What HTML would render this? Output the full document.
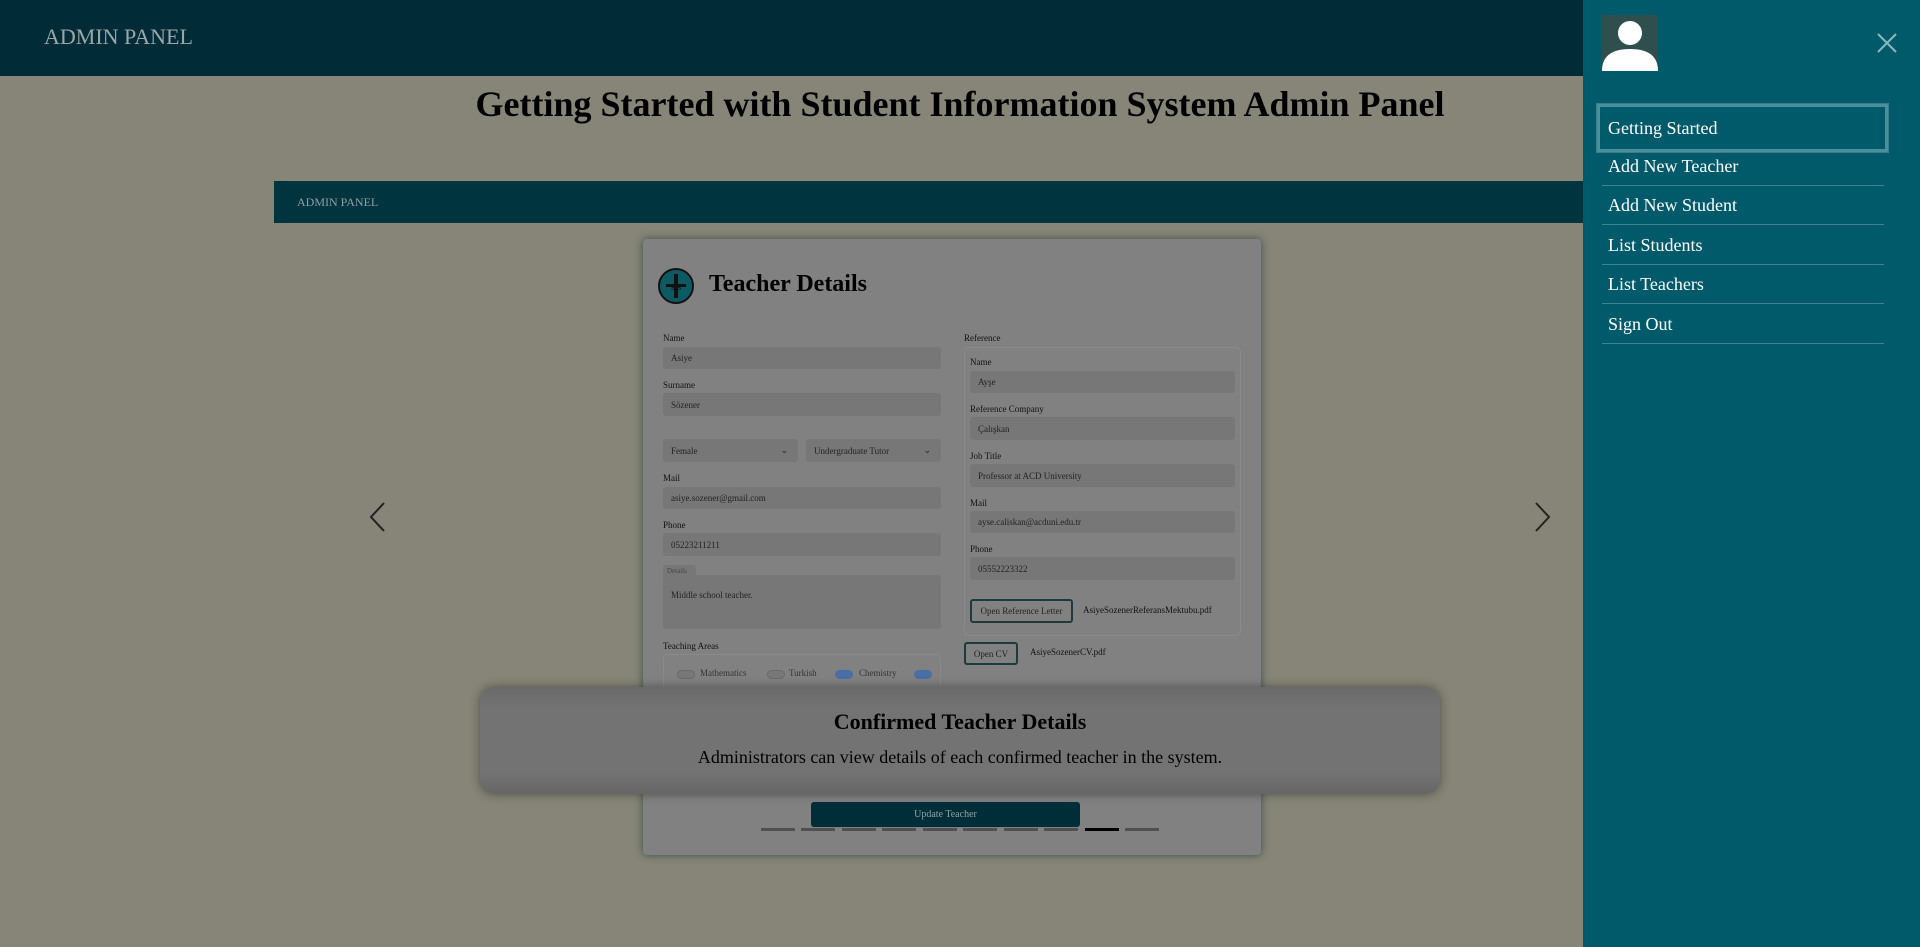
<!DOCTYPE html>
<html><head><meta charset="utf-8"><style>
*{box-sizing:border-box;margin:0;padding:0}
body{width:1920px;height:947px;overflow:hidden;background:#868577;font-family:"Liberation Serif",serif;position:relative;color:#111}
.a{position:absolute}
.hdr{left:0;top:0;width:1920px;height:76px;background:#012c37}
.lbl{font-size:9px;color:#111}
.inp{background:#777;border-radius:3px;font-size:9px;color:#222;padding-left:8px;display:flex;align-items:center}
.card{left:643px;top:239px;width:618px;height:616px;background:#818181;border-radius:4px;box-shadow:0 0 8px rgba(0,40,40,.6)}
.btn{border:2px solid #1f3a3a;border-radius:3px;font-size:9px;color:#222;display:flex;align-items:center;justify-content:center}
.tg{width:18px;height:9px;border-radius:5px;background:#787878;border:1px solid #6a6a6a}
.tg.on{background:#4a6fa5;border-color:#4a6fa5}
.dot{top:828px;width:34px;height:3px;background:#505050}
.side{left:1583px;top:0;width:337px;height:947px;background:#005a69}
.mi{left:1602px;width:282px;font-size:18px;color:#fff;height:39px;border-bottom:1px solid #3f8591;display:flex;align-items:center;padding-left:6px}
</style></head><body>
<div class="a hdr"></div>
<div class="a" style="left:44px;top:24px;font-size:22px;color:#9aa6a8">ADMIN PANEL</div>
<div class="a" style="left:0;width:1920px;top:83px;text-align:center;font-size:36px;font-weight:bold;color:#000">Getting Started with Student Information System Admin Panel</div>
<div class="a" style="left:274px;top:181px;width:1400px;height:42px;background:#00343f"></div>
<div class="a" style="left:297px;top:195px;font-size:12px;color:#8fa0a3">ADMIN PANEL</div>
<svg class="a" style="left:366px;top:500px" width="22" height="34"><path d="M18 3 L5 17 L18 31" stroke="#222" stroke-width="2" fill="none"/></svg>
<svg class="a" style="left:1532px;top:500px" width="22" height="34"><path d="M4 3 L17 17 L4 31" stroke="#222" stroke-width="2" fill="none"/></svg>
<div class="a card"></div>
<svg class="a" style="left:658px;top:268px" width="36" height="36"><circle cx="18" cy="18" r="17" fill="#0d5a63" stroke="#111" stroke-width="2"/><rect x="16" y="6" width="4" height="24" fill="#111"/><rect x="8" y="16" width="20" height="3" fill="#111"/><text x="18" y="22" font-size="10" text-anchor="middle" font-family="Liberation Serif" fill="#111">s  s</text></svg>
<div class="a" style="left:709px;top:271px;font-size:24px;font-weight:bold;color:#000">Teacher Details</div>
<div class="a lbl" style="left:663px;top:333px">Name</div>
<div class="a inp" style="left:663px;top:347px;width:278px;height:22px">Asiye</div>
<div class="a lbl" style="left:663px;top:380px">Surname</div>
<div class="a inp" style="left:663px;top:393px;width:278px;height:23px">Sözener</div>
<div class="a inp" style="left:663px;top:439px;width:135px;height:23px">Female<span style="margin-left:auto;margin-right:10px">⌄</span></div>
<div class="a inp" style="left:806px;top:439px;width:135px;height:23px">Undergraduate Tutor<span style="margin-left:auto;margin-right:10px">⌄</span></div>
<div class="a lbl" style="left:663px;top:473px">Mail</div>
<div class="a inp" style="left:663px;top:487px;width:278px;height:22px">asiye.sozener@gmail.com</div>
<div class="a lbl" style="left:663px;top:520px">Phone</div>
<div class="a inp" style="left:663px;top:533px;width:278px;height:23px">05223211211</div>
<div class="a inp" style="left:663px;top:565px;width:33px;height:12px;font-size:7px;color:#444;padding-left:4px">Details</div>
<div class="a inp" style="left:663px;top:575px;width:278px;height:54px;align-items:flex-start;padding-top:15px">Middle school teacher.</div>
<div class="a lbl" style="left:663px;top:641px">Teaching Areas</div>
<div class="a" style="left:663px;top:654px;width:278px;height:60px;border:1px solid #8a8a8a;border-radius:4px"></div>
<div class="a tg" style="left:677px;top:670px"></div><div class="a lbl" style="left:700px;top:668px;color:#333">Mathematics</div>
<div class="a tg" style="left:767px;top:670px"></div><div class="a lbl" style="left:789px;top:668px;color:#333">Turkish</div>
<div class="a tg on" style="left:835px;top:670px"></div><div class="a lbl" style="left:859px;top:668px;color:#333">Chemistry</div>
<div class="a tg on" style="left:914px;top:670px"></div>
<div class="a lbl" style="left:964px;top:333px">Reference</div>
<div class="a" style="left:964px;top:347px;width:277px;height:289px;border:1px solid #8a8a8a;border-radius:5px"></div>
<div class="a lbl" style="left:970px;top:357px">Name</div>
<div class="a inp" style="left:970px;top:371px;width:265px;height:22px">Ayşe</div>
<div class="a lbl" style="left:970px;top:404px">Reference Company</div>
<div class="a inp" style="left:970px;top:417px;width:265px;height:23px">Çalışkan</div>
<div class="a lbl" style="left:970px;top:451px">Job Title</div>
<div class="a inp" style="left:970px;top:464px;width:265px;height:23px">Professor at ACD University</div>
<div class="a lbl" style="left:970px;top:498px">Mail</div>
<div class="a inp" style="left:970px;top:511px;width:265px;height:22px">ayse.caliskan@acduni.edu.tr</div>
<div class="a lbl" style="left:970px;top:544px">Phone</div>
<div class="a inp" style="left:970px;top:557px;width:265px;height:23px">05552223322</div>
<div class="a btn" style="left:970px;top:599px;width:103px;height:24px">Open Reference Letter</div>
<div class="a lbl" style="left:1083px;top:605px">AsiyeSozenerReferansMektubu.pdf</div>
<div class="a btn" style="left:964px;top:642px;width:54px;height:23px">Open CV</div>
<div class="a lbl" style="left:1030px;top:647px">AsiyeSozenerCV.pdf</div>
<div class="a lbl" style="left:678px;top:723px;color:#666">Terminated</div>
<div class="a" style="left:665px;top:750px;width:10px;height:10px;background:#8aa;border-radius:2px"></div>
<div class="a" style="left:480px;top:687px;width:960px;height:107px;border-radius:14px;background:linear-gradient(#6a6a6a,#737373 20%,#737373 80%,#666);box-shadow:0 0 10px rgba(0,0,0,.4)"></div>
<div class="a" style="left:480px;width:960px;top:709px;text-align:center;font-size:22px;font-weight:bold;color:#000">Confirmed Teacher Details</div>
<div class="a" style="left:480px;width:960px;top:747px;text-align:center;font-size:18px;color:#000">Administrators can view details of each confirmed teacher in the system.</div>
<div class="a" style="left:811px;top:802px;width:269px;height:25px;background:#002e38;border-radius:3px;color:#8fa3a6;font-size:10px;display:flex;align-items:center;justify-content:center">Update Teacher</div>
<div class="a dot" style="left:761px"></div><div class="a dot" style="left:801px"></div><div class="a dot" style="left:842px"></div><div class="a dot" style="left:882px"></div><div class="a dot" style="left:923px"></div><div class="a dot" style="left:963px"></div><div class="a dot" style="left:1004px"></div><div class="a dot" style="left:1044px"></div><div class="a dot" style="left:1085px;background:#000"></div><div class="a dot" style="left:1125px"></div>
<div class="a side"></div>
<svg class="a" style="left:1602px;top:15px" width="56" height="56"><rect width="56" height="56" fill="#2f4f4f"/><circle cx="28" cy="18" r="12" fill="#fff"/><path d="M0 56 Q0 34 28 34 Q56 34 56 56Z" fill="#fff"/></svg>
<svg class="a" style="left:1877px;top:33px" width="20" height="20"><path d="M1 1L19 19M19 1L1 19" stroke="#8ab8be" stroke-width="2"/></svg>
<div class="a" style="left:1597px;top:104px;width:291px;height:48px;border:3px solid #4a909c;box-shadow:0 0 0 1px #3a7f8a"></div>
<div class="a mi" style="top:107px;border:none;height:42px;left:1602px">Getting Started</div>
<div class="a mi" style="top:147px">Add New Teacher</div>
<div class="a mi" style="top:186px">Add New Student</div>
<div class="a mi" style="top:226px">List Students</div>
<div class="a mi" style="top:265px">List Teachers</div>
<div class="a mi" style="top:305px">Sign Out</div>
</body></html>
